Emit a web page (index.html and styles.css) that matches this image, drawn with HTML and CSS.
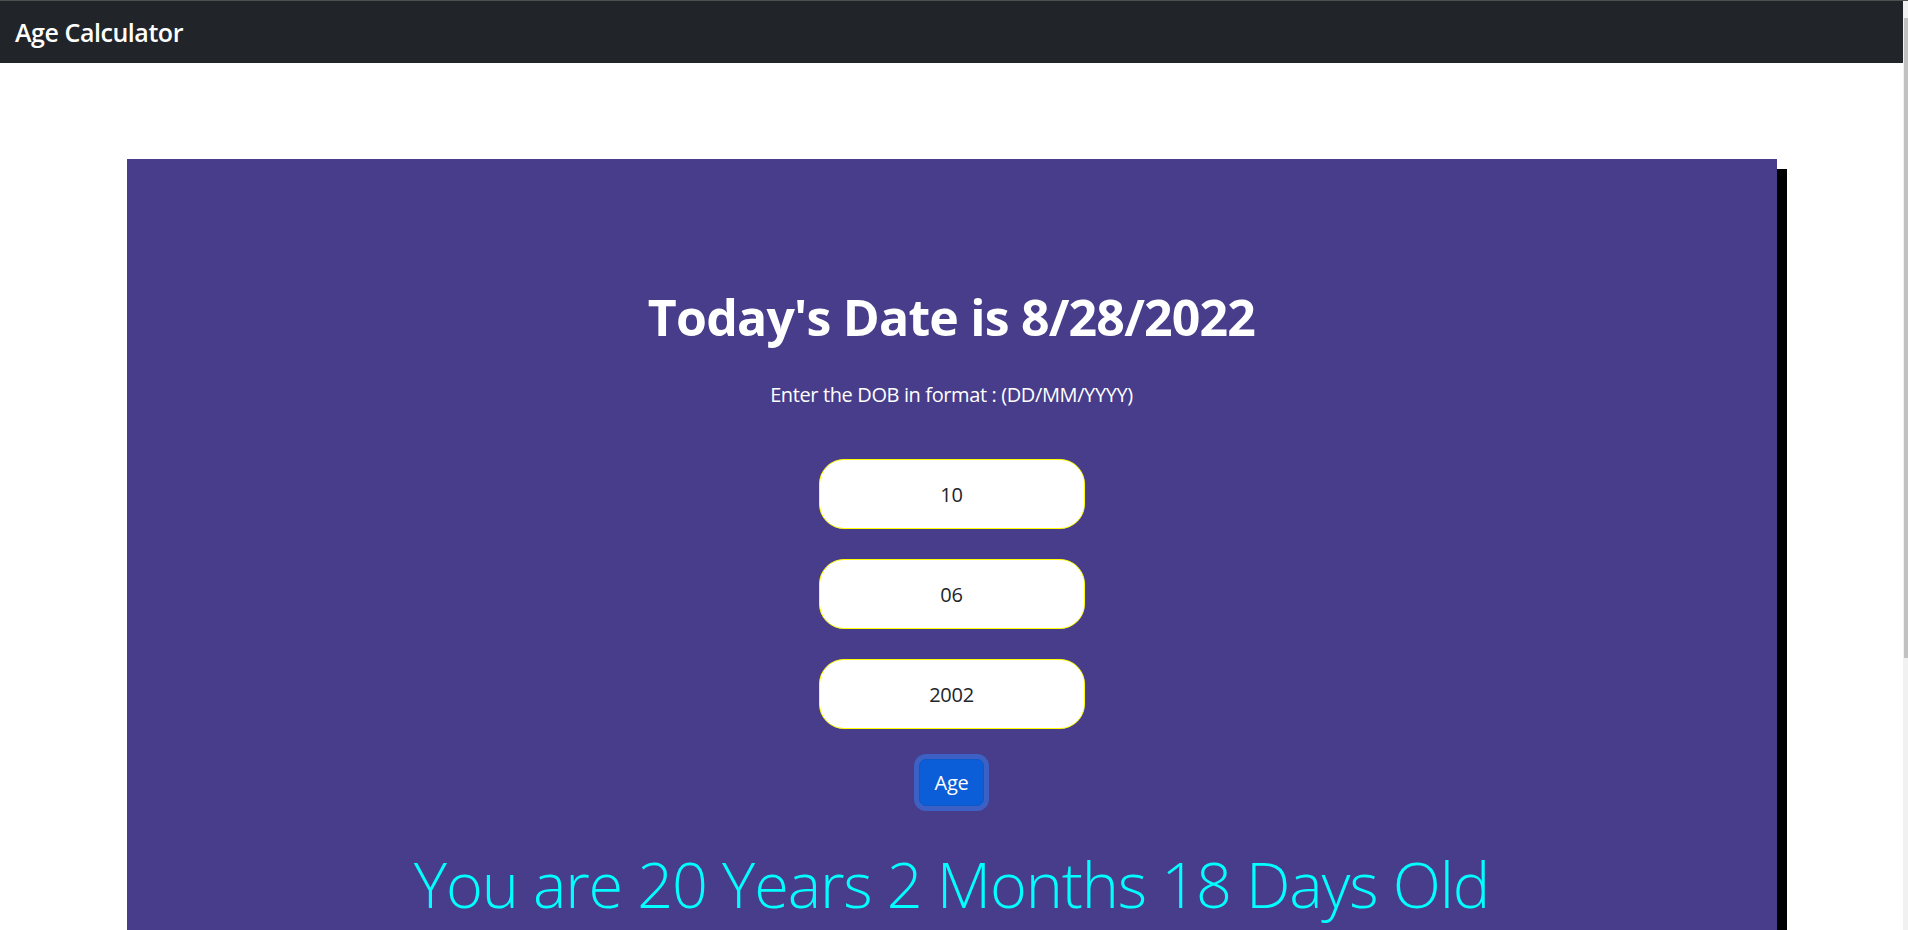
FILE: index.html
```html
<!DOCTYPE html>
<html lang="en">
<head>
<meta charset="utf-8">
<title>Age Calculator</title>
<link rel="stylesheet" href="styles.css">
</head>
<body>
<div class="window">
  <div class="page">
    <nav class="navbar"><span class="brand">Age Calculator</span></nav>
    <main class="stage">
      <section class="card">
        <h1 class="title">Today's Date is 8/28/2022</h1>
        <p class="hint">Enter the DOB in format : (DD/MM/YYYY)</p>
        <div class="form">
          <input class="field" type="text" value="10">
          <input class="field" type="text" value="06">
          <input class="field" type="text" value="2002">
          <button class="btn" type="button">Age</button>
        </div>
        <h2 class="result">You are 20 Years 2 Months 18 Days Old</h2>
      </section>
    </main>
  </div>
  <div class="scrollbar"><div class="thumb"></div></div>
</div>
</body>
</html>
```
FILE: styles.css
```css
html, body {
  margin: 0;
  padding: 0;
  height: 930px;
  overflow: hidden;
  background: #ffffff;
  font-family: "Open Sans", "Noto Sans", "Liberation Sans", sans-serif;
}

.window {
  display: flex;
  height: 929px;
  border-top: 1px solid #4f4f4f;
}

.page {
  flex: 1;
  display: flex;
  flex-direction: column;
  min-width: 0;
}

.navbar {
  height: 62px;
  background: #212529;
  display: flex;
  align-items: center;
  padding-left: 15px;
  flex-shrink: 0;
}

.brand {
  color: #ffffff;
  font-size: 25px;
  font-weight: 600;
  letter-spacing: -0.45px;
}

.stage {
  flex: 1;
  padding-top: 96px;
}

.card {
  width: 1650px;
  margin: 0 auto;
  background: #483d8b;
  box-shadow: 10px 10px 0 #000000;
  padding: 128px 0 200px;
  display: flex;
  flex-direction: column;
  align-items: center;
  text-align: center;
}

.title {
  margin: 0 0 33px;
  font-size: 50px;
  line-height: 60px;
  font-weight: 700;
  letter-spacing: -0.8px;
  color: #ffffff;
}

.hint {
  margin: 0 0 49px;
  font-size: 20px;
  line-height: 30px;
  letter-spacing: -0.38px;
  color: #ffffff;
}

.form {
  display: flex;
  flex-direction: column;
  align-items: center;
  gap: 30px;
}

.field {
  box-sizing: border-box;
  width: 266px;
  height: 70px;
  border: 1px solid #ffff00;
  border-radius: 25px;
  background: #ffffff;
  text-align: center;
  font-family: inherit;
  font-size: 20px;
  letter-spacing: -0.3px;
  color: #212529;
  outline: none;
}

.btn {
  box-sizing: border-box;
  height: 47px;
  padding: 0 15px;
  background: #0b5ed7;
  border: 1px solid #0a58ca;
  border-radius: 7px;
  color: #ffffff;
  font-family: inherit;
  font-size: 20px;
  line-height: 30px;
  letter-spacing: -0.3px;
  box-shadow: 0 0 0 5px rgba(49, 132, 253, 0.5);
}

.result {
  margin: 40px 0 0;
  font-size: 63px;
  line-height: 76px;
  font-weight: 300;
  letter-spacing: -1.15px;
  color: #00ffff;
}

.scrollbar {
  width: 5px;
  background: #f1f1f1;
  padding-top: 17px;
  flex-shrink: 0;
}

.thumb {
  height: 640px;
  margin-left: 1px;
  background: #c1c1c1;
}
```
